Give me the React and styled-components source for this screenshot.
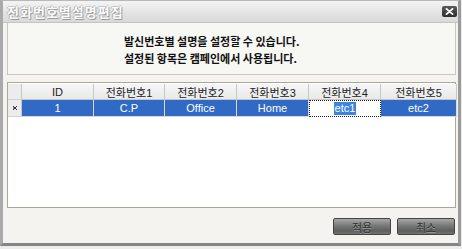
import React from 'react';
import styled, { createGlobalStyle } from 'styled-components';

const GlobalStyle = createGlobalStyle`
  html, body {
    margin: 0;
    padding: 0;
    background: #ececec;
  }
  body {
    font-family: "Liberation Sans", "Noto Sans CJK KR", sans-serif;
  }
`;

const columns = [ 'ID', '전화번호1', '전화번호2', '전화번호3', '전화번호4', '전화번호5' ];
const rows = [ [ '1', 'C.P', 'Office', 'Home', 'etc1', 'etc2' ] ];
const EDIT_COL = 4;

const CloseIcon = () => (
  <svg width="9" height="7" viewBox="0 0 9 7">
    <path d="M1.5 0.8 L7.5 6.2 M7.5 0.8 L1.5 6.2" stroke="#fff" strokeWidth="1.8" strokeLinecap="round"/>
  </svg>
);

const RowMarker = () => (
  <svg width="6" height="6" viewBox="0 0 6 6">
    <path d="M1 1 L5 5 M5 1 L1 5 M1 3 L3 3" stroke="#333" strokeWidth="1"/>
  </svg>
);

export default function App(){
  return ( <>
    <GlobalStyle/>
    <Window>
      <TitleBar>
        <Title>전화번호별설명편집</Title>
        <CloseButton><CloseIcon/></CloseButton>
      </TitleBar>
      <Body>
        <InfoPanel>
          <InfoLine>발신번호별 설명을 설정할 수 있습니다.</InfoLine>
          <InfoLine>설정된 항목은 캠페인에서 사용됩니다.</InfoLine>
        </InfoPanel>
        <Grid>
          <GridRow>
            <RowHeader header/>
            { columns.map( c => <HeaderCell key={ c }>{ c }</HeaderCell> ) }
          </GridRow>
          { rows.map( ( r, i ) => (
            <GridRow key={ i }>
              <RowHeader><RowMarker/></RowHeader>
              { r.map( ( v, j ) => j === EDIT_COL
                ? <EditCell key={ j }><Highlight>{ v }</Highlight></EditCell>
                : <DataCell key={ j }>{ v }</DataCell> ) }
            </GridRow>
          ) ) }
        </Grid>
        <ButtonBar>
          <Button>적용</Button>
          <Button>취소</Button>
        </ButtonBar>
      </Body>
    </Window>
  </> );
}

const Window = styled.div`
  width: 461px;
  height: 246px;
  box-sizing: border-box;
  display: flex;
  flex-direction: column;
  background: #f4f3ef;
  border-left: 3px solid #a9a9a9;
  border-right: 3px solid #9a9a9a;
  border-bottom: 3px solid #858585;
  border-top: 1px solid #b8b8b8;
`;

const TitleBar = styled.div`
  height: 21px;
  flex: none;
  display: flex;
  align-items: center;
  justify-content: space-between;
  padding: 0 1px 0 4px;
  background: linear-gradient(#f4f4f4, #e2e2e2 60%, #d9d9d9);
  border-bottom: 1px solid #c4c4c4;
`;

const Title = styled.div`
  font-family: "Noto Sans CJK KR", sans-serif;
  font-size: 13px;
  font-weight: 700;
  letter-spacing: 1px;
  color: #fafafa;
  text-shadow: 1px 1px 0 #9a9a9a, -1px 0 0 #b4b4b4, 0 -1px 0 #c8c8c8;
`;

const CloseButton = styled.div`
  width: 15px;
  height: 11px;
  display: flex;
  align-items: center;
  justify-content: center;
  border-radius: 2px;
  background: linear-gradient(#5a5a5a, #2e2e2e);
`;

const Body = styled.div`
  flex: 1;
  display: flex;
  flex-direction: column;
  padding: 0 2px 0 4px;
`;

const InfoPanel = styled.div`
  height: 52px;
  box-sizing: border-box;
  display: flex;
  flex-direction: column;
  align-items: flex-start;
  justify-content: center;
  gap: 4px;
  background: #f7f7f4;
  border: 1px solid #c9c6bd;
  border-top: none;
  padding: 3px 0 0 116px;
`;

const InfoLine = styled.div`
  font-family: "Noto Sans CJK KR", sans-serif;
  font-size: 11px;
  font-weight: 700;
  color: #111;
  line-height: 13px;
`;

const Grid = styled.div`
  margin-top: 7px;
  height: 126px;
  box-sizing: border-box;
  background: #fff;
  border: 1px solid #aca899;
  padding: 1px 0 0 0;
`;

const GridRow = styled.div`
  display: grid;
  grid-template-columns: 14px 72px 71px 72px 72px 72px 76px;
`;

const cellBase = `
  height: 16px;
  box-sizing: border-box;
  display: flex;
  align-items: center;
  justify-content: center;
  font-family: "Liberation Sans", "Noto Sans CJK KR", sans-serif;
  font-size: 11px;
  white-space: nowrap;
`;

const RowHeader = styled.div`
  ${ cellBase }
  height: ${ props => props.header ? '16px' : '17px' };
  background: #ececec;
  border-right: 1px solid #c6c6c6;
  border-bottom: 1px solid #d2d2d2;
`;

const HeaderCell = styled.div`
  ${ cellBase }
  background: linear-gradient(#f6f6f6, #e9e9e9);
  color: #222;
  border-right: 1px solid #c6c6c6;
  border-bottom: 1px solid #c6c6c6;
`;

const DataCell = styled.div`
  ${ cellBase }
  height: 17px;
  background: #316ac5;
  color: #fff;
  border-right: 1px solid #d8d8d8;
  border-bottom: 1px solid #d8d8d8;
`;

const EditCell = styled.div`
  ${ cellBase }
  height: 17px;
  background: #fff;
  border: 1px dotted #222;
`;

const Highlight = styled.span`
  background: #3d86e0;
  color: #fff;
  padding: 0 1px;
  line-height: 13px;
`;

const ButtonBar = styled.div`
  flex: 1;
  display: flex;
  align-items: center;
  justify-content: flex-end;
  gap: 6px;
  padding-right: 1px;
  padding-top: 2px;
`;

const Button = styled.div`
  width: 58px;
  height: 17px;
  box-sizing: border-box;
  display: flex;
  align-items: center;
  justify-content: center;
  border: 1px solid #444;
  border-radius: 2px;
  background: linear-gradient(#a8a8a8, #7c7c7c 40%, #5e5e5e 80%, #747474);
  font-family: "Noto Sans CJK KR", sans-serif;
  font-size: 11px;
  color: #333;
  text-shadow: 0 1px 0 #9a9a9a;
`;
